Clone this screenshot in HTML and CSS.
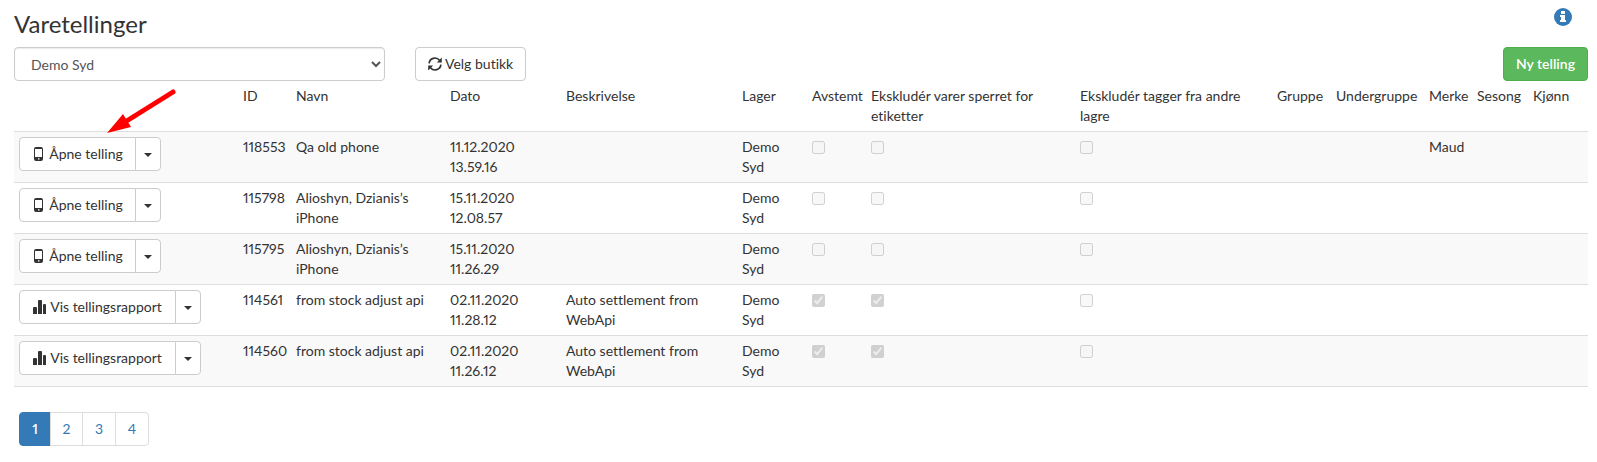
FILE: index.html
```
<!DOCTYPE html>
<html lang="nb">
<head>
<meta charset="utf-8">
<title>Varetellinger</title>
<link rel="stylesheet" href="styles.css">
</head>
<body>
<svg class="sprites" aria-hidden="true">
  <symbol id="phone" viewBox="0 0 14 14"><path fill-rule="evenodd" d="M4 0h5q2 0 2 2v10q0 2-2 2H4q-2 0-2-2V2q0-2 2-2zM3 2v8h7V2zM6 11.200v1.400h1.500v-1.400z"/></symbol>
  <symbol id="bars" viewBox="0 0 14 14"><path d="M0 8q0-1 1-1h2q1 0 1 1v6H0zM5 1q0-1 1-1h2q1 0 1 1v13H5zM10 5q0-1 1-1h1q1 0 1 1v9h-3z"/></symbol>
</svg>
<main class="page">
  <header class="top">
    <h1 class="title">Varetellinger</h1>
    <a class="info" href="#" aria-label="Informasjon"><svg viewBox="0 0 18 18"><circle cx="9" cy="9" r="9" fill="#337ab7"/><path fill="#fff" d="M7 3h4v3H7zM6 7h5v5h1v2H6v-2h1V9H6z"/></svg></a>
  </header>
  <div class="toolbar">
    <select class="store" aria-label="Butikk"><option>Demo Syd</option></select>
    <button class="btn" type="button"><svg class="icon" viewBox="0 0 14 14"><path fill="none" stroke="currentColor" stroke-width="1.700" d="M1.100 6.300A5.900 5.900 0 0 1 11.500 3.200M12.900 7.700A5.900 5.900 0 0 1 2.500 10.800"/><path d="M13.800.5v5H8.800zM.2 13.500v-5h5z"/></svg>Velg butikk</button>
    <button class="btn btn-new" type="button">Ny telling</button>
  </div>
  <table class="counts">
    <colgroup><col class="c-action"><col class="c-id"><col class="c-name"><col class="c-date"><col class="c-desc"><col class="c-stock"><col class="c-settled"><col class="c-labels"><col class="c-tags"><col class="c-group"><col class="c-sub"><col class="c-brand"><col class="c-season"><col class="c-gender"></colgroup>
    <thead><tr><th></th><th>ID</th><th>Navn</th><th>Dato</th><th>Beskrivelse</th><th>Lager</th><th>Avstemt</th><th>Ekskludér varer sperret for etiketter</th><th>Ekskludér tagger fra andre lagre</th><th>Gruppe</th><th>Undergruppe</th><th>Merke</th><th>Sesong</th><th>Kjønn</th></tr></thead>
    <tbody>
      <tr><td><div class="split"><button class="btn btn-open" type="button"><svg class="icon"><use href="#phone"/></svg>Åpne telling</button><button class="btn btn-caret" type="button" aria-label="Flere valg"></button></div></td><td>118553</td><td>Qa old phone</td><td>11.12.2020 13.59.16</td><td></td><td>Demo Syd</td><td><input type="checkbox" aria-label="Avstemt" disabled></td><td><input type="checkbox" aria-label="Ekskludér varer" disabled></td><td><input type="checkbox" aria-label="Ekskludér tagger" disabled></td><td></td><td></td><td>Maud</td><td></td><td></td></tr>
      <tr><td><div class="split"><button class="btn btn-open" type="button"><svg class="icon"><use href="#phone"/></svg>Åpne telling</button><button class="btn btn-caret" type="button" aria-label="Flere valg"></button></div></td><td>115798</td><td>Alioshyn, Dzianis’s iPhone</td><td>15.11.2020 12.08.57</td><td></td><td>Demo Syd</td><td><input type="checkbox" aria-label="Avstemt" disabled></td><td><input type="checkbox" aria-label="Ekskludér varer" disabled></td><td><input type="checkbox" aria-label="Ekskludér tagger" disabled></td><td></td><td></td><td></td><td></td><td></td></tr>
      <tr><td><div class="split"><button class="btn btn-open" type="button"><svg class="icon"><use href="#phone"/></svg>Åpne telling</button><button class="btn btn-caret" type="button" aria-label="Flere valg"></button></div></td><td>115795</td><td>Alioshyn, Dzianis’s iPhone</td><td>15.11.2020 11.26.29</td><td></td><td>Demo Syd</td><td><input type="checkbox" aria-label="Avstemt" disabled></td><td><input type="checkbox" aria-label="Ekskludér varer" disabled></td><td><input type="checkbox" aria-label="Ekskludér tagger" disabled></td><td></td><td></td><td></td><td></td><td></td></tr>
      <tr><td><div class="split"><button class="btn btn-report" type="button"><svg class="icon"><use href="#bars"/></svg>Vis tellingsrapport</button><button class="btn btn-caret" type="button" aria-label="Flere valg"></button></div></td><td>114561</td><td>from stock adjust api</td><td>02.11.2020 11.28.12</td><td>Auto settlement from WebApi</td><td>Demo Syd</td><td><input type="checkbox" aria-label="Avstemt" checked disabled></td><td><input type="checkbox" aria-label="Ekskludér varer" checked disabled></td><td><input type="checkbox" aria-label="Ekskludér tagger" disabled></td><td></td><td></td><td></td><td></td><td></td></tr>
      <tr><td><div class="split"><button class="btn btn-report" type="button"><svg class="icon"><use href="#bars"/></svg>Vis tellingsrapport</button><button class="btn btn-caret" type="button" aria-label="Flere valg"></button></div></td><td>114560</td><td>from stock adjust api</td><td>02.11.2020 11.26.12</td><td>Auto settlement from WebApi</td><td>Demo Syd</td><td><input type="checkbox" aria-label="Avstemt" checked disabled></td><td><input type="checkbox" aria-label="Ekskludér varer" checked disabled></td><td><input type="checkbox" aria-label="Ekskludér tagger" disabled></td><td></td><td></td><td></td><td></td><td></td></tr>
    </tbody>
  </table>
  <nav class="pages" aria-label="Sider"><a class="current" href="#">1</a><a href="#">2</a><a href="#">3</a><a href="#">4</a></nav>
  <svg class="pointer" viewBox="0 0 72 48" aria-hidden="true"><path d="M66 5L18 35" stroke="red" stroke-width="5" stroke-linecap="round"/><path fill="red" d="M0 46L16 27 19 32 24 40z"/></svg>
</main>
</body>
</html>
```
FILE: styles.css
```
* { box-sizing: border-box; }
body { margin: 0; background: #fff; color: #333; font: 14px/20px Lato, "Liberation Sans", sans-serif; font-variant-numeric: proportional-nums; font-variant-ligatures: none; }
.sprites { display: none; }
.page { position: relative; padding: 8px 9px 16px 14px; }
.top { display: flex; justify-content: space-between; align-items: flex-start; height: 39px; }
.title { margin: 0; font-size: 24px; line-height: 32px; font-weight: 400; }
.info { width: 18px; height: 18px; margin-right: 16px; }
.info svg { display: block; width: 18px; height: 18px; }
.toolbar { display: flex; }
.store { width: 371px; height: 34px; margin-right: 30px; padding: 6px 12px; border: 1px solid #ccc; border-radius: 4px; background: #fff; color: #555; font: inherit; box-shadow: inset 0 1px 1px rgba(0, 0, 0, .08); }
.btn { display: inline-flex; align-items: center; justify-content: center; height: 34px; padding: 6px 12px; border: 1px solid #ccc; border-radius: 4px; background: #fff; color: #333; font: inherit; font-variant-ligatures: none; white-space: nowrap; }
.icon { flex: none; width: 14px; height: 14px; margin-right: 3px; fill: currentColor; }
.btn-new { margin-left: auto; border-color: #4cae4c; background: #5cb85c; color: #fff; font-weight: 600; }
.split { display: flex; }
.btn-open { width: 117px; border-radius: 4px 0 0 4px; }
.btn-report { width: 157px; border-radius: 4px 0 0 4px; }
.btn-caret { width: 26px; margin-left: -1px; padding: 0; border-radius: 0 4px 4px 0; }
.btn-caret::before { content: ""; margin-top: 2px; border: 4px solid transparent; border-top-color: #333; border-bottom: 0; }
.counts { width: 100%; table-layout: fixed; border-collapse: collapse; border-bottom: 1px solid #ddd; }
.counts th, .counts td { padding: 5px; text-align: left; vertical-align: top; font-weight: 400; }
.counts td { height: 51px; border-top: 1px solid #ddd; }
.counts tbody tr:nth-child(odd) { background: #f9f9f9; }
.counts input { display: block; width: 13px; height: 13px; margin: 4px 0 0; }
.c-action { width: 224px; }
.c-id { width: 53px; }
.c-name { width: 154px; }
.c-date { width: 116px; }
.c-desc { width: 176px; }
.c-stock { width: 70px; }
.c-settled { width: 59px; }
.c-labels { width: 209px; }
.c-tags { width: 197px; }
.c-group { width: 59px; }
.c-sub { width: 93px; }
.c-brand { width: 48px; }
.c-season { width: 56px; }
.c-gender { width: 60px; }
.pages { display: flex; padding: 25px 5px 0; }
.pages a { width: 34px; height: 34px; margin-left: -1px; padding: 6px 0; border: 1px solid #ddd; color: #337ab7; text-align: center; text-decoration: none; }
.pages a:first-child { width: 32px; margin-left: 0; border-radius: 4px 0 0 4px; }
.pages a:nth-child(2) { width: 33px; }
.pages a:last-child { border-radius: 0 4px 4px 0; }
.pages .current { border-color: #337ab7; background: #337ab7; color: #fff; font-weight: 600; }
.pointer { position: absolute; left: 107px; top: 87px; width: 72px; height: 48px; pointer-events: none; }
```
